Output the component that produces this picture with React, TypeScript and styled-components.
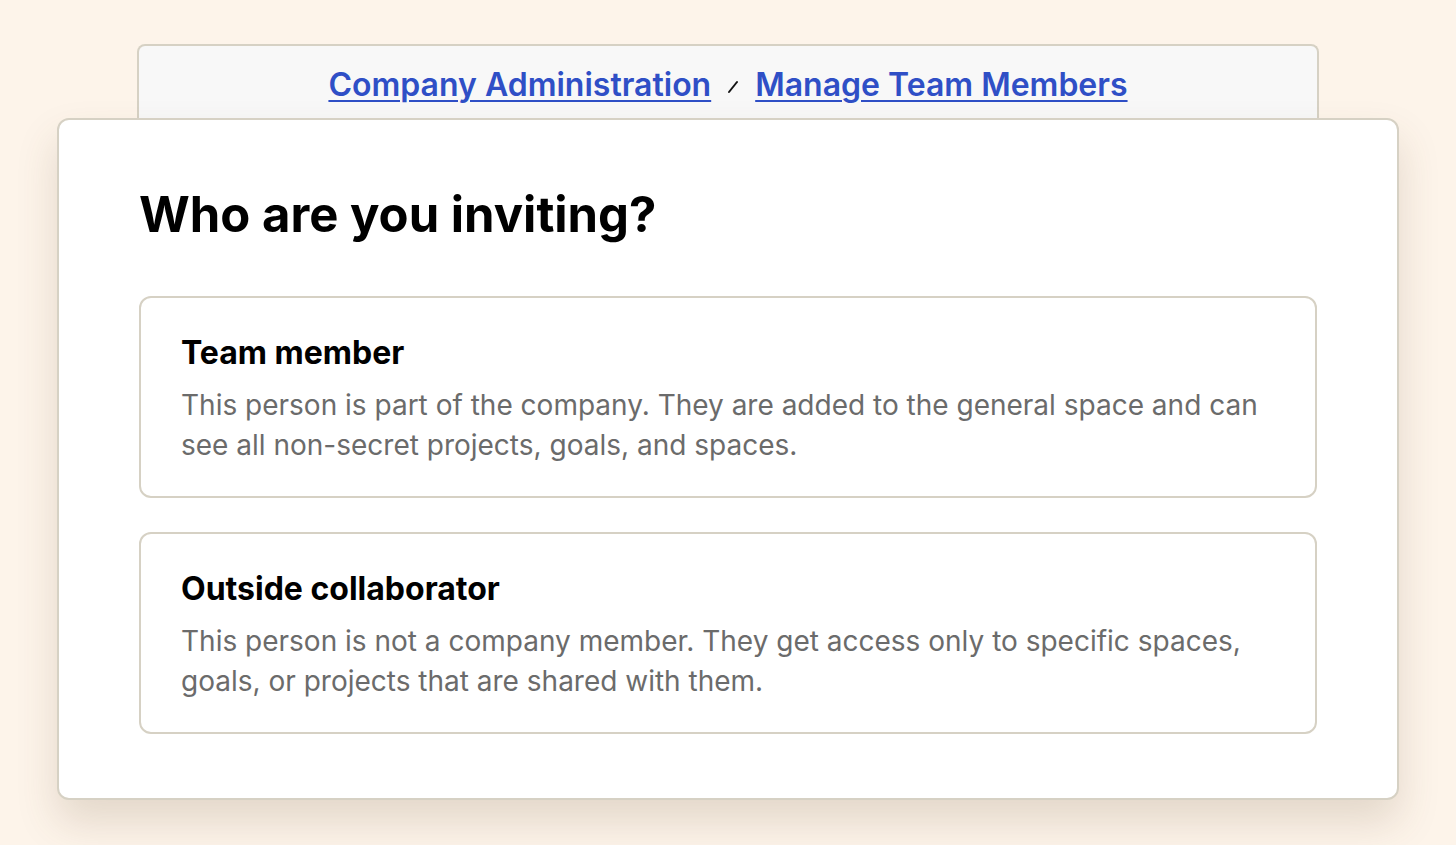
import React from "react";
import styled, { createGlobalStyle } from "styled-components";

const Global = createGlobalStyle`
  html, body { margin: 0; padding: 0; }
  body {
    background: #fdf4ea;
    font-family: Inter, "Noto Sans", sans-serif;
    -webkit-font-smoothing: antialiased;
    min-height: 845px;
  }
`;

const Page = styled.div`
  width: 1342px;
  margin: 0 auto;
  padding-top: 44px;
  display: flex;
  flex-direction: column;
`;

const Breadcrumbs = styled.nav`
  margin: 0 80px;
  height: 74px;
  box-sizing: border-box;
  background: #f8f8f8;
  border: 2px solid #d6d1c4;
  border-bottom: none;
  border-radius: 8px 8px 0 0;
  display: flex;
  align-items: center;
  justify-content: center;
  gap: 14px;
  padding-top: 4px;
`;

const Crumb = styled.a`
  color: #2f4fc6;
  font-size: 32px;
  font-weight: 600;
  text-decoration: underline;
  text-decoration-thickness: 2px;
  text-underline-offset: 4px;
  cursor: pointer;
`;

const Sep = styled.svg`
  width: 16px;
  height: 16px;
  margin-top: 4px;
`;

const Card = styled.main`
  position: relative;
  background: #ffffff;
  border: 2px solid #d6d1c4;
  border-radius: 12px;
  padding: 65px 80px 64px 80px;
  box-shadow: 0 22px 40px rgba(100, 80, 50, 0.17);
  display: flex;
  flex-direction: column;
`;

const Heading = styled.h1`
  margin: 0 0 51px 0;
  font-size: 49px;
  line-height: 60px;
  font-weight: 700;
  color: #000;
`;

const Options = styled.div`
  display: flex;
  flex-direction: column;
  gap: 34px;
`;

const Option = styled.button`
  text-align: left;
  font-family: inherit;
  background: #fff;
  border: 2px solid #d6d1c4;
  border-radius: 12px;
  padding: 37px 40px 31px 40px;
  display: flex;
  flex-direction: column;
  gap: 14px;
  cursor: pointer;
`;

const OptionTitle = styled.div`
  font-size: 32px;
  line-height: 36px;
  font-weight: 700;
  color: #000;
`;

const OptionText = styled.div`
  font-size: 28px;
  line-height: 40px;
  font-weight: 400;
  color: #6b6b6b;
`;

const options = [
  {
    title: "Team member",
    text: "This person is part of the company. They are added to the general space and can see all non-secret projects, goals, and spaces.",
  },
  {
    title: "Outside collaborator",
    text: "This person is not a company member. They get access only to specific spaces, goals, or projects that are shared with them.",
  },
];

export default function App() {
  return (
    <>
      <Global />
      <Page>
        <Breadcrumbs>
          <Crumb>Company Administration</Crumb>
          <Sep viewBox="0 0 16 16">
            <line x1="4" y1="14" x2="12" y2="4" stroke="#111" strokeWidth="2" strokeLinecap="round" />
          </Sep>
          <Crumb>Manage Team Members</Crumb>
        </Breadcrumbs>
        <Card>
          <Heading>Who are you inviting?</Heading>
          <Options>
            {options.map((o) => (
              <Option key={o.title}>
                <OptionTitle>{o.title}</OptionTitle>
                <OptionText>{o.text}</OptionText>
              </Option>
            ))}
          </Options>
        </Card>
      </Page>
    </>
  );
}
